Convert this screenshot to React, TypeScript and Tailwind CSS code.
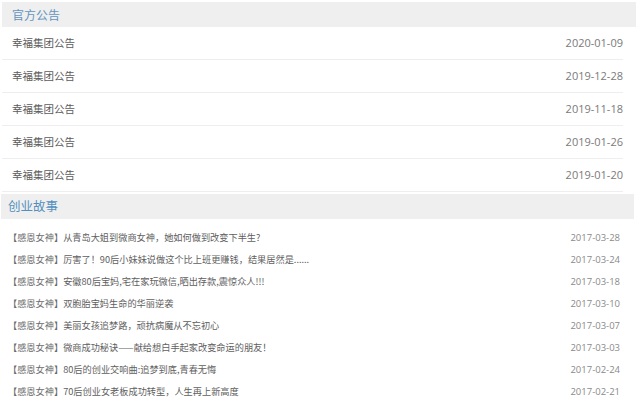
import React from "react";

const notices = ["2020-01-09", "2019-12-28", "2019-11-18", "2019-01-26", "2019-01-20"];

const stories: [string, string][] = [
  ["从青岛大姐到微商女神，她如何做到改变下半生?", "2017-03-28"],
  ["厉害了！90后小妹妹说做这个比上班更赚钱，结果居然是......", "2017-03-24"],
  ["安徽80后宝妈,宅在家玩微信,晒出存款,震惊众人!!!", "2017-03-18"],
  ["双胞胎宝妈生命的华丽逆袭", "2017-03-10"],
  ["美丽女孩追梦路，顽抗病魔从不忘初心", "2017-03-07"],
  ["微商成功秘诀——献给想白手起家改变命运的朋友！", "2017-03-03"],
  ["80后的创业交响曲:追梦到底,青春无悔", "2017-02-24"],
  ["70后创业女老板成功转型，人生再上新高度", "2017-02-21"],
];

const font = { fontFamily: '"Microsoft YaHei", "Noto Sans CJK SC", sans-serif' };

export default function App() {
  return (
    <div className="w-[640px] h-[406px] bg-white overflow-hidden pt-[2px]" style={font}>
      <div className="ml-[2px] w-[634px] h-[25px] bg-[#efefef] flex items-center pl-[10px]">
        <span className="text-[12px] text-[#6494bf] leading-none">官方公告</span>
      </div>
      <div className="ml-[2px] w-[621px]">
        {notices.map((d, i) => (
          <div
            key={i}
            className="h-[33px] border-b border-[#eeeeee] flex items-center justify-between pl-[10px]"
          >
            <span className="text-[10.5px] text-[#5c5c5c]">幸福集团公告</span>
            <span className="text-[11px] text-[#7a7a7a]" style={{ fontFamily: '"Open Sans", sans-serif' }}>
              {d}
            </span>
          </div>
        ))}
      </div>
      <div className="mt-[2px] ml-[1px] w-[633px] h-[25px] bg-[#efefef] flex items-center pl-[7px]">
        <span className="text-[12.5px] text-[#5390c0] leading-none">创业故事</span>
      </div>
      <div className="ml-[8px] w-[612px] pt-[8px]">
        {stories.map(([t, d], i) => (
          <div key={i} className="h-[22px] flex items-center justify-between">
            <span className="text-[9.2px] text-[#606060] whitespace-nowrap">
              <span className="text-[#6a6a6a]">【感恩女神】</span>
              {t}
            </span>
            <span className="text-[9.5px] text-[#8a8a8a]" style={{ fontFamily: '"Open Sans", sans-serif' }}>
              {d}
            </span>
          </div>
        ))}
      </div>
    </div>
  );
}
